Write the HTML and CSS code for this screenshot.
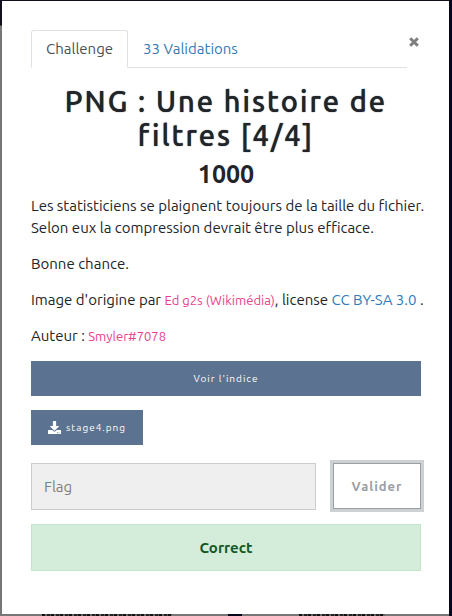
FILE: index.html
```html
<!DOCTYPE html>
<html lang="fr">
<head>
<meta charset="utf-8">
<meta name="viewport" content="width=device-width, initial-scale=1">
<title>PNG : Une histoire de filtres [4/4]</title>
<link rel="stylesheet" href="styles.css">
</head>
<body>
<main class="modal">
  <header class="top">
    <nav class="tabs">
      <a class="tab active" href="#challenge">Challenge</a>
      <a class="tab" href="#solves">33 Validations</a>
    </nav>
    <button class="close" type="button" aria-label="Fermer">
      <svg viewBox="0 0 10 10" width="10" height="10"><path d="M1.2 1.2 8.8 8.8M8.8 1.2 1.2 8.8" fill="none" stroke="currentColor" stroke-width="3"/></svg>
    </button>
  </header>
  <section class="challenge" id="challenge">
    <h1>PNG : Une histoire de filtres [4/4]</h1>
    <h2>1000</h2>
    <div class="description">
      <p>Les statisticiens se plaignent toujours de la taille du fichier.<br>Selon eux la compression devrait être plus efficace.</p>
      <p>Bonne chance.</p>
      <p>Image d'origine par <code>Ed g2s (Wikimédia)</code>, license <a href="#license">CC BY-SA 3.0</a> .</p>
      <p>Auteur : <code>Smyler#7078</code></p>
    </div>
    <button class="btn hint" type="button">Voir l'indice</button>
    <a class="btn file" href="#file">
      <svg viewBox="0 0 512 512" width="13" height="13"><path fill="currentColor" d="M216 0h80c13 0 24 11 24 24v168h88c18 0 27 21 14 34L270 378c-8 8-20 8-28 0L90 226c-13-13-4-34 14-34h88V24c0-13 11-24 24-24zm296 376v112c0 13-11 24-24 24H24c-13 0-24-11-24-24V376c0-13 11-24 24-24h147l49 49c20 20 52 20 72 0l49-49h147c13 0 24 11 24 24zM388 464a20 20 0 1 0-40 0 20 20 0 0 0 40 0zm64 0a20 20 0 1 0-40 0 20 20 0 0 0 40 0z"/></svg>
      <span>stage4.png</span>
    </a>
    <form class="answer">
      <input type="text" aria-label="Flag" placeholder="Flag">
      <button class="submit" type="button">Valider</button>
    </form>
    <div class="alert" role="status">Correct</div>
  </section>
</main>
</body>
</html>
```
FILE: styles.css
```css
* { box-sizing: border-box; }

body {
  margin: 0;
  min-height: 100vh;
  padding: 1px 3px 2px 2px;
  background:
    linear-gradient(#05071a, #05071a) right top / 3px 100% no-repeat,
    linear-gradient(#10101e, #10101e) left top / 100% 1px no-repeat,
    repeating-linear-gradient(90deg, #111 0 3px, #666 3px 5px, #222 5px 8px, #555 8px 9px) 42px 100% / 130px 2px no-repeat,
    repeating-linear-gradient(90deg, #111 0 3px, #666 3px 5px, #222 5px 8px, #555 8px 9px) 299px 100% / 86px 2px no-repeat,
    linear-gradient(#05071a, #05071a) 228px 100% / 14px 2px no-repeat,
    linear-gradient(#10101e 25px, #777 26px);
  color: #212529;
  font: 15px/22px Ubuntu, "Noto Sans", sans-serif;
}

.modal {
  min-height: calc(100vh - 3px);
  padding: 29px 28px 42px 29px;
  background: #fff;
}

a { color: #337ab7; text-decoration: none; }

.top { display: flex; align-items: flex-start; }

.tabs {
  display: flex;
  flex: 1;
  border-bottom: 1px solid #dee2e6;
}

.tab {
  margin-bottom: -1px;
  padding: 7px 14px;
  border: 1px solid transparent;
  border-radius: 3px 3px 0 0;
}

.tab.active {
  border-color: #dee2e6 #dee2e6 #fff;
  background: #fff;
  color: #495057;
}

.close {
  display: flex;
  margin-top: 7px;
  padding: 0 2px;
  border: 0;
  background: none;
  color: #7f7f7f;
}

h1, h2 { margin: 0; text-align: center; }

h1 {
  padding-top: 16px;
  font-size: 29px;
  font-weight: 500;
  line-height: 34px;
  letter-spacing: 2px;
  text-shadow: 0 0 1px currentColor;
}

h2 {
  padding: 8px 0 7px;
  font-size: 25px;
  font-weight: 600;
  line-height: 28px;
}

.description { white-space: nowrap; }

p { margin: 0 0 14px; }

code {
  color: #e83e8c;
  font-family: inherit;
  font-size: 13px;
}

.btn {
  height: 35px;
  border: 0;
  background: #5b7290;
  color: #fff;
  font-family: inherit;
  font-size: 10px;
  font-weight: 400;
  letter-spacing: 1px;
}

.hint { display: block; width: 100%; }

.file {
  display: inline-flex;
  align-items: center;
  gap: 5px;
  margin-top: 14px;
  padding: 0 17px;
}

.answer {
  display: flex;
  gap: 17px;
  margin: 18px 0 14px;
}

.answer input {
  flex: 1;
  min-width: 0;
  height: 47px;
  padding: 0 12px;
  border: 1px solid #ccc;
  border-radius: 0;
  background: #efefef;
  font: inherit;
}

.answer input::placeholder { color: #7b8085; }

.submit {
  flex: 0 0 88px;
  height: 46px;
  padding: 0;
  border: 1px solid #9a9fa4;
  background: #fff;
  box-shadow: 0 0 0 3px #ced1d4;
  color: #9a9fa6;
  font: 600 13px/20px Ubuntu, "Noto Sans", sans-serif;
  letter-spacing: 1px;
}

.alert {
  padding: 12px;
  border: 1px solid #c3e6cb;
  background: #d4edda;
  color: #155724;
  font-weight: 700;
  line-height: 21px;
  text-align: center;
}
```
